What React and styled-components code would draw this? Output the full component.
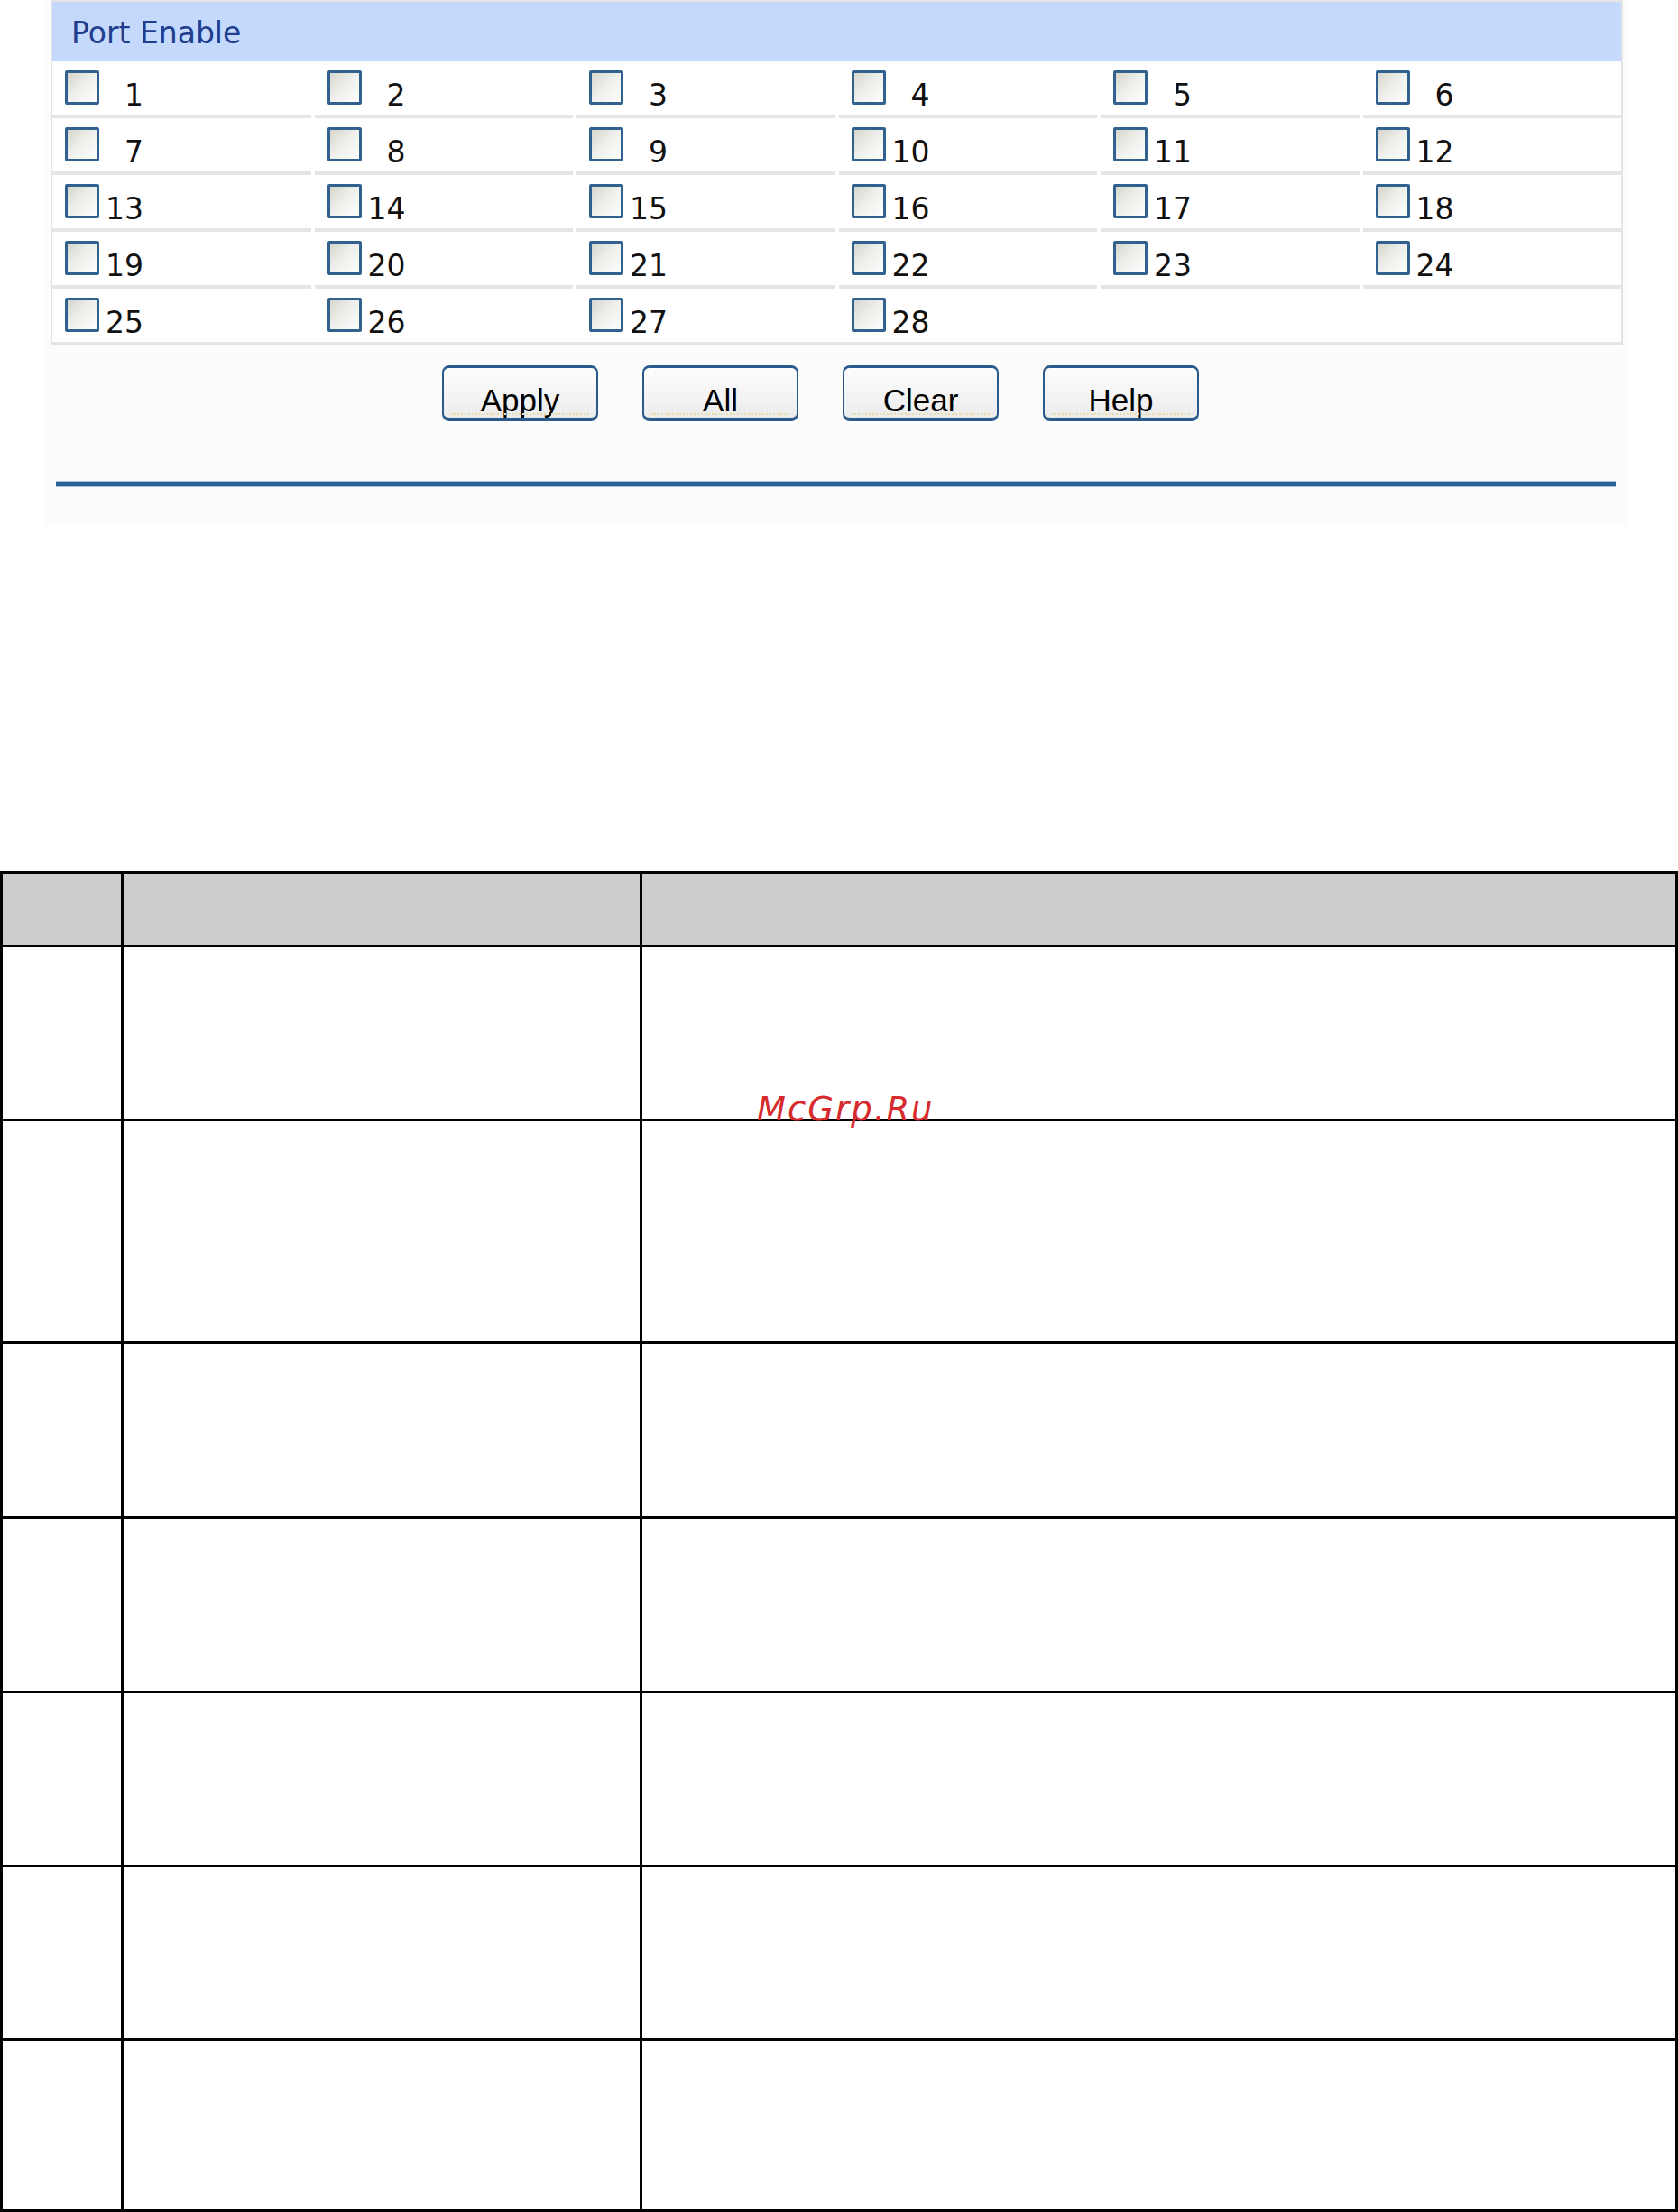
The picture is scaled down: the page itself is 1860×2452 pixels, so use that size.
import React from "react";
import styled, { createGlobalStyle } from "styled-components";

const GlobalStyle = createGlobalStyle`
  html, body {
    margin: 0;
    padding: 0;
    background: #ffffff;
  }
  body {
    width: 1860px;
    min-height: 2452px;
    font-family: "DejaVu Sans", Verdana, sans-serif;
  }
  * { box-sizing: border-box; }
`;

const Page = styled.div`
  width: 1860px;
`;

const ConfigBox = styled.section`
  margin-left: 50px;
  width: 1756px;
  padding: 0 7px 42px 6px;
  background: #fcfcfc;
`;

const Panel = styled.div`
  border: 2px solid #e4e4e4;
  border-bottom-width: 3px;
  background: #ffffff;
`;

const PanelHeader = styled.div`
  height: 66px;
  padding: 15px 0 0 21px;
  background: #c5d9fc;
  color: #1f3e8e;
  font-family: "DejaVu Sans", Verdana, sans-serif;
  font-size: 33px;
  line-height: 39px;
  white-space: nowrap;
`;

const PortGrid = styled.div`
  display: grid;
  grid-template-columns: repeat(6, 1fr);
  column-gap: 4px;
`;

const PortCell = styled.label`
  display: flex;
  align-items: flex-start;
  height: ${(p) => (p.$last ? "59px" : "63px")};
  padding: 10px 0 0 14px;
  border-bottom: ${(p) => (p.$last ? "none" : "4px solid #e5e5e5")};
`;

const PortBox = styled.input.attrs({ type: "checkbox" })`
  appearance: none;
  -webkit-appearance: none;
  margin: 0;
  flex: none;
  width: 38px;
  height: 38px;
  border: 3px solid #31628f;
  border-radius: 2px;
  background: linear-gradient(135deg, #d6d6ce 0%, #eeeeea 45%, #fdfdfd 100%);
`;

const PortLabel = styled.span`
  min-width: 42px;
  margin: 8px 0 0 7px;
  text-align: right;
  color: #111111;
  font-family: "DejaVu Sans", Verdana, sans-serif;
  font-size: 33px;
  line-height: 40px;
`;

const ButtonRow = styled.div`
  display: flex;
  justify-content: center;
  gap: 49px;
  margin-top: 23px;
  padding-right: 36px;
`;

const ActionButton = styled.button`
  position: relative;
  display: block;
  width: 173px;
  height: 62px;
  padding: 16px 0 0;
  border: 2px solid #2a5b8c;
  border-top-width: 3px;
  border-bottom-width: 4px;
  border-radius: 8px;
  background: linear-gradient(to bottom, #fdfdfd 0%, #f4f4f4 55%, #ebebeb 100%);
  color: #000000;
  font-family: "Liberation Sans", Arial, sans-serif;
  font-size: 35px;
  line-height: 40px;
  text-align: center;
  cursor: default;

  &::after {
    content: "";
    position: absolute;
    left: 8px;
    right: 8px;
    bottom: 3px;
    border-bottom: 2px dotted #eadca6;
  }
`;

const Divider = styled.hr`
  height: 7px;
  margin: 66px 8px 0 6px;
  border: none;
  background: linear-gradient(
    to bottom,
    #a9c1d9 0,
    #a9c1d9 1px,
    #2a6496 1px,
    #2a6496 6px,
    #a9c1d9 6px
  );
`;

const SpecTable = styled.div`
  position: relative;
  margin-top: 384px;
  width: 1860px;
  display: grid;
  grid-template-columns: 134px 575px 1fr;
  grid-template-rows: 81px 193px 247px 194px 193px 193px 192px 190px;
  border-top: 3px solid #000000;
  border-left: 3px solid #000000;
`;

const SpecCell = styled.div`
  border-right: 3px solid #000000;
  border-bottom: 3px solid #000000;
  background: ${(p) => (p.$head ? "#cccccc" : "#ffffff")};
`;

const Watermark = styled.div`
  position: absolute;
  left: 836px;
  top: 242px;
  color: #d62a2d;
  font-family: "DejaVu Sans", Verdana, sans-serif;
  font-style: italic;
  font-size: 37px;
  line-height: 1;
  letter-spacing: 2px;
  white-space: nowrap;
`;

const ports = Array.from({ length: 30 }, (_, i) => (i < 28 ? i + 1 : null));
const buttons = ["Apply", "All", "Clear", "Help"];
const tableRows = 8;

export default function App() {
  return (
    <Page>
      <GlobalStyle />
      <ConfigBox>
        <Panel>
          <PanelHeader>Port Enable</PanelHeader>
          <PortGrid>
            {ports.map((n, i) => (
              <PortCell key={i} $last={i >= 24}>
                {n !== null && (
                  <>
                    <PortBox aria-label={`Port ${n}`} />
                    <PortLabel>{n}</PortLabel>
                  </>
                )}
              </PortCell>
            ))}
          </PortGrid>
        </Panel>
        <ButtonRow>
          {buttons.map((b) => (
            <ActionButton key={b} type="button">
              {b}
            </ActionButton>
          ))}
        </ButtonRow>
        <Divider />
      </ConfigBox>

      <SpecTable>
        {Array.from({ length: tableRows * 3 }, (_, i) => (
          <SpecCell key={i} $head={i < 3} />
        ))}
        <Watermark>McGrp.Ru</Watermark>
      </SpecTable>
    </Page>
  );
}
